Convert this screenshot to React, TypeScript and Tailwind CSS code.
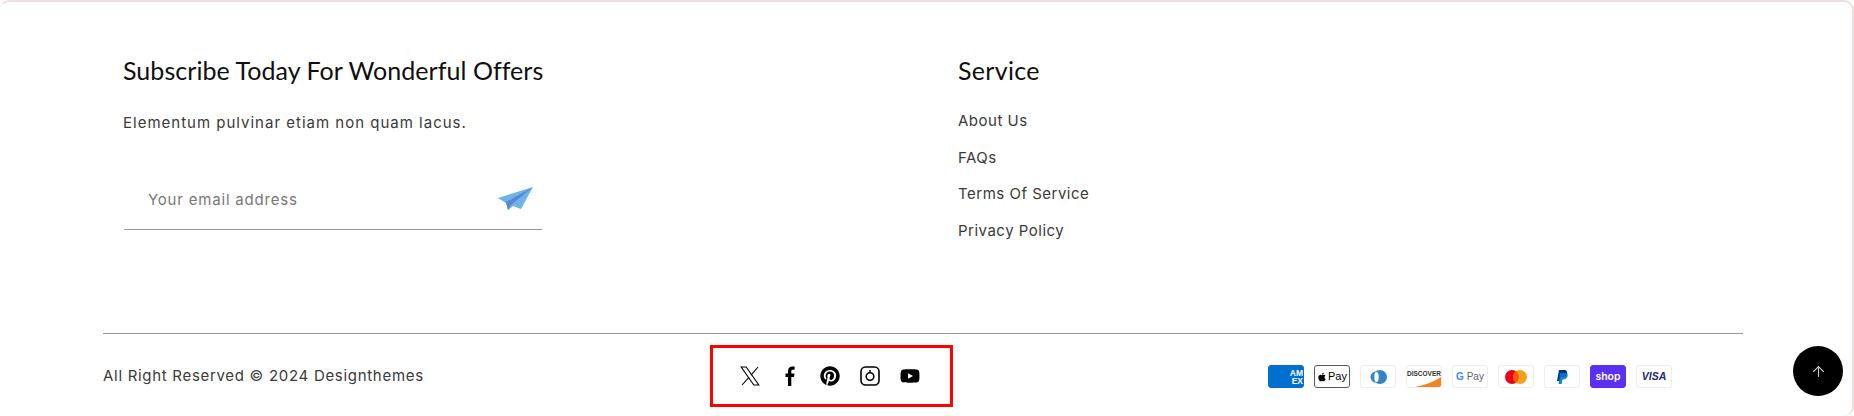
import { ArrowUp } from 'lucide-react';
import { FaApple, FaPinterest, FaYoutube } from 'react-icons/fa';

const links = ['About Us', 'FAQs', 'Terms Of Service', 'Privacy Policy'];

function PaperPlane() {
  return (
    <svg className="-mt-[3px]" width="35" height="23" viewBox="0 0 35 23">
      <path d="M0 11 L35 0 L23 22 L15 19 L10 23 L8 16 Z" fill="#6CB4E4" />
      <path d="M8 15 L35 0 L13 18 L10 23 Z" fill="#5B86D8" />
    </svg>
  );
}

function XIcon() {
  return (
    <svg width="20" height="20" viewBox="0 0 20 20" fill="none" stroke="#000" strokeWidth="1.1">
      <path d="M1.2 1 H6.2 L18.8 19 H13.8 Z" />
      <path d="M18 1 L11 9.1 M9 11.4 L2 19" />
    </svg>
  );
}

function FacebookIcon() {
  return (
    <svg width="10" height="20" viewBox="0 0 10 20" fill="#000">
      <path d="M3 20 V11 H0.5 V7.5 H3 V5 C3 2 4.8 0.5 7.3 0.5 C8.4 0.5 9.3 0.6 9.6 0.6 V3.7 H8 C6.6 3.7 6.3 4.4 6.3 5.3 V7.5 H9.5 L9 11 H6.3 V20 Z" />
    </svg>
  );
}

function InstagramIcon() {
  return (
    <svg width="20" height="20" viewBox="0 0 20 20" fill="none" stroke="#000">
      <rect x="1" y="1" width="18" height="18" rx="4.5" strokeWidth="1.6" />
      <circle cx="10" cy="10.5" r="3.8" strokeWidth="1.6" />
      <circle cx="10" cy="5" r="1" fill="#000" stroke="none" />
    </svg>
  );
}

function Card({ className, children }: { className?: string; children: React.ReactNode }) {
  return (
    <div className={`flex h-[23px] w-[36px] items-center justify-center overflow-hidden rounded-[3px] border ${className ?? 'border-[#eeeeee] bg-white'}`}>
      {children}
    </div>
  );
}

function Payments() {
  return (
    <div className="flex items-center gap-[10px]">
      <Card className="border-[#016fd0] bg-[#016fd0]">
        <div className="ml-auto text-right font-['Liberation_Sans',sans-serif] text-[8.5px] leading-[8px] font-bold text-white">
          <div>AM</div>
          <div>EX</div>
        </div>
      </Card>
      <Card className="border-[#5a5a5a] bg-white">
        <FaApple className="h-[10px] w-[10px] text-black" />
        <span className="ml-[1px] font-['Liberation_Sans',sans-serif] text-[11px] text-black">Pay</span>
      </Card>
      <Card>
        <svg width="20" height="14" viewBox="0 0 20 14">
          <circle cx="12" cy="7" r="7" fill="#3286c7" />
          <circle cx="8" cy="7" r="5.5" fill="#3286c7" />
          <ellipse cx="8.5" cy="7" rx="2.2" ry="5" fill="#fff" />
        </svg>
      </Card>
      <Card>
        <div className="relative flex h-full w-full items-start justify-center">
          <span className="mt-[4px] font-['Liberation_Sans',sans-serif] text-[6.5px] leading-[8px] font-bold text-[#333]">DISCOVER</span>
          <svg className="absolute right-0 bottom-0" width="26" height="10" viewBox="0 0 26 10">
            <path d="M0 10 Q16 7 26 0 V10 Z" fill="#f58220" />
          </svg>
        </div>
      </Card>
      <Card>
        <span className="font-['Liberation_Sans',sans-serif] text-[10px] text-[#5f6368]">
          <span className="font-bold text-[#4285f4]">G</span> Pay
        </span>
      </Card>
      <Card>
        <svg width="22" height="14" viewBox="0 0 22 14">
          <circle cx="7" cy="7" r="7" fill="#eb001b" />
          <circle cx="15" cy="7" r="7" fill="#f79e1b" />
          <path d="M11 1.3 A7 7 0 0 1 11 12.7 A7 7 0 0 1 11 1.3" fill="#ff5f00" />
        </svg>
      </Card>
      <Card>
        <svg width="12" height="14" viewBox="0 0 12 14">
          <path d="M3 0 H8 C11 0 11.5 2 11 4 C10.3 6.5 8.5 7 6 7 H5 L4 11 H1 Z" fill="#003087" />
          <path d="M4 3 H9.5 C12.5 3 12 6 11 7.5 C10 9 8.5 9.5 6.5 9.5 L5.7 14 H2.5 Z" fill="#0079c1" opacity="0.9" />
        </svg>
      </Card>
      <Card className="border-[#5a31f4] bg-[#5a31f4]">
        <span className="font-['Inter',sans-serif] text-[10.5px] font-semibold text-white">shop</span>
      </Card>
      <Card>
        <span className="font-['Liberation_Sans',sans-serif] text-[10.5px] font-bold text-[#1a2a7c] italic">VISA</span>
      </Card>
    </div>
  );
}

export default function App() {
  return (
    <footer className="relative h-[416px] w-[1854px] overflow-hidden rounded-[10px] border-t-2 border-r-2 border-[#ecdfdd] bg-white font-['Inter',sans-serif] text-[#3a3a3a]">
      <div className="flex h-[331px] pt-[50px] pl-[123px]">
        <div className="w-[835px]">
          <h3 className="font-['Lato',sans-serif] text-[25px] leading-[36px] tracking-[0.05px] text-[#0f0f0f]">Subscribe Today For Wonderful Offers</h3>
          <p className="mt-[23px] text-[15px] leading-[24px] tracking-[1px]">Elementum pulvinar etiam non quam lacus.</p>
          <div className="mt-[34px] ml-px flex h-[61px] w-[418px] items-center justify-between border-b border-[#999] pt-[2px] pr-[9px] pl-[24px]">
            <span className="text-[15px] tracking-[0.8px] text-[#777]">Your email address</span>
            <PaperPlane />
          </div>
        </div>
        <div>
          <h3 className="font-['Lato',sans-serif] text-[25px] leading-[36px] tracking-[0.3px] text-[#0f0f0f]">Service</h3>
          <ul className="mt-[21px] flex flex-col gap-[12px] text-[15px] leading-[24.6px] tracking-[0.5px]">
            {links.map((link) => (
              <li key={link}>{link}</li>
            ))}
          </ul>
        </div>
      </div>
      <div className="mx-[103px] flex h-[75px] w-[1640px] items-start border-t border-[#999]">
        <p className="mt-[30px] w-[607px] text-[15px] leading-[24px] tracking-[0.7px]">All Right Reserved © 2024 Designthemes</p>
        <div className="mt-[11px] flex h-[62px] w-[243px] items-center justify-center gap-[20px] border-[3px] border-[#ff0000] pr-[3px] text-black">
          <XIcon />
          <div className="flex w-5 justify-center">
            <FacebookIcon />
          </div>
          <FaPinterest className="h-5 w-5" />
          <InstagramIcon />
          <FaYoutube className="h-5 w-5" />
        </div>
        <div className="mt-[31px] ml-[315px]">
          <Payments />
        </div>
      </div>
      <button type="button" className="absolute top-[344px] right-[9px] flex h-[50px] w-[50px] items-center justify-center rounded-full bg-black text-[#cccccc]">
        <ArrowUp className="h-[17px] w-[17px]" strokeWidth={1.5} />
      </button>
    </footer>
  );
}
